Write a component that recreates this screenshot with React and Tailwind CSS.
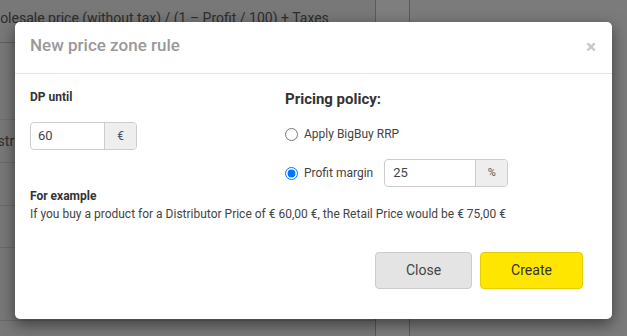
import React from "react";

function App() {
  return (
    <div className="relative w-[627px] h-[336px] overflow-hidden bg-[#787878] font-['Roboto',sans-serif]">
      {/* page behind the overlay */}
      <div className="flex h-full">
        <div className="w-[375px] flex flex-col">
          <div className="h-[43px] border-b border-[#5e5e5e] pt-[9px] text-[14px] leading-[18px] text-[#2e2e2e] whitespace-nowrap -ml-[20px]">
            Wholesale price (without tax) / (1 – Profit / 100) + Taxes
          </div>
          <div className="h-[77px] border-b border-[#6e6e6e]" />
          <div className="h-[43px] border-b border-[#6a6a6a] flex items-center text-[14px] text-[#2e2e2e] -ml-[15px]">
            Distributor
          </div>
          <div className="h-[43px] border-b border-[#6a6a6a]" />
          <div className="h-[42px] border-b border-[#6a6a6a]" />
          <div className="h-[42px]" />
          <div className="flex justify-end gap-[3px] pr-[3px] h-[30px]">
            <div className="w-[29px] h-[26px] rounded-[3px] bg-[#2b2b2b]" />
            <div className="w-[29px] h-[26px] rounded-[3px] bg-[#2b2b2b]" />
          </div>
          <div className="border-b border-[#6a6a6a]" />
        </div>
        <div className="w-[35px] bg-[#7e7e7e] border-l border-[#5a5a5a] border-r" />
        <div className="flex-1 bg-[#7b7b7b]" />
      </div>

      {/* modal */}
      <div className="absolute left-[15px] top-[22px] w-[597px] h-[297px] bg-white rounded-[5px] shadow-[0_5px_15px_rgba(0,0,0,0.5)] flex flex-col">
        <div className="h-[52px] flex items-center justify-between pl-[15px] pr-[16px] border-b border-[#e5e5e5]">
          <span className="text-[17px] font-medium text-[#999999] mt-[-3px]">New price zone rule</span>
          <span className="text-[19px] font-bold text-[#c8c8c8] leading-none mt-[-2px]">×</span>
        </div>

        <div className="px-[15px] pt-[15px] text-[#333333]">
          <div className="flex">
            <div className="w-[255px]">
              <div className="text-[12px] font-bold leading-[16px]">DP until</div>
              <div className="mt-[17px] flex w-[107px] h-[28px] border border-[#cccccc] rounded-[4px] overflow-hidden">
                <div className="w-[73px] flex items-center pl-[7px] text-[13px] text-[#444]">60</div>
                <div className="flex-1 bg-[#eeeeee] border-l border-[#cccccc] flex items-center justify-center text-[12px] text-[#555]">
                  €
                </div>
              </div>
            </div>
            <div className="flex-1">
              <div className="text-[15px] font-bold leading-[20px] text-[#333]">Pricing policy:</div>
              <label className="mt-[15px] h-[20px] flex items-center gap-[6px] text-[12px] text-[#444]">
                <input type="radio" name="policy" className="m-0 w-[13px] h-[13px]" />
                Apply BigBuy RRP
              </label>
              <div className="mt-[15px] flex items-center">
                <label className="flex items-center gap-[6px] text-[12px] text-[#444]">
                  <input type="radio" name="policy" defaultChecked className="m-0 w-[13px] h-[13px]" />
                  Profit margin
                </label>
                <div className="ml-[11px] flex w-[124px] h-[28px] border border-[#cccccc] rounded-[4px] overflow-hidden">
                  <div className="w-[90px] flex items-center pl-[8px] text-[13px] text-[#444]">25</div>
                  <div className="flex-1 bg-[#eeeeee] border-l border-[#cccccc] flex items-center justify-center text-[11px] text-[#555]">
                    %
                  </div>
                </div>
              </div>
            </div>
          </div>
          <div className="mt-[1px] text-[12px] font-bold leading-[16px]">For example</div>
          <div className="mt-[2px] text-[12px] leading-[16px] text-[#444]">
            If you buy a product for a Distributor Price of € 60,00 €, the Retail Price would be € 75,00 €
          </div>
          <div className="mt-[30px] flex justify-end gap-[8px] pr-[14px]">
            <button className="w-[97px] h-[37px] bg-[#e4e4e4] border border-[#cccccc] rounded-[4px] text-[14px] text-[#444]">
              Close
            </button>
            <button className="w-[103px] h-[37px] bg-[#ffe600] border border-[#e6cf00] rounded-[4px] text-[14px] text-[#333]">
              Create
            </button>
          </div>
        </div>
      </div>
    </div>
  );
}

export default App;
